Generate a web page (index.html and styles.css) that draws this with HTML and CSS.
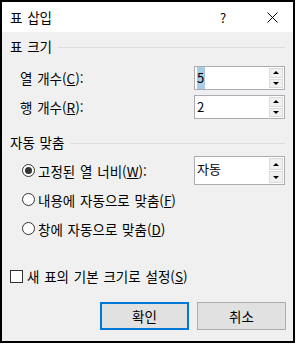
FILE: index.html
```html
<!DOCTYPE html>
<html lang="ko">
<head>
    <meta charset="UTF-8">
    <meta name="viewport" content="width=device-width, initial-scale=1.0">
    <title>표 삽입</title>
    <link rel="stylesheet" href="styles.css">
</head>
<body>
    <div class="dialog">
        <div class="titlebar">
            <span class="title">표 삽입</span>
            <span class="help">?</span>
            <span class="close">
                <svg width="11" height="11" viewBox="0 0 11 11">
                    <path d="M0.5 0.5 L10.5 10.5 M10.5 0.5 L0.5 10.5" stroke="#000" stroke-width="1" fill="none"/>
                </svg>
            </span>
        </div>

        <div class="content">
            <div class="group-head">
                <span>표 크기</span>
                <span class="rule"></span>
            </div>

            <div class="field first">
                <label class="field-label">열 개수(<u>C</u>):</label>
                <div class="spin">
                    <span class="spin-value"><span class="selected">5</span></span>
                    <span class="spin-arrows">
                        <span class="arrow up"></span>
                        <span class="arrow down"></span>
                    </span>
                </div>
            </div>

            <div class="field">
                <label class="field-label">행 개수(<u>R</u>):</label>
                <div class="spin">
                    <span class="spin-value">2</span>
                    <span class="spin-arrows">
                        <span class="arrow up"></span>
                        <span class="arrow down"></span>
                    </span>
                </div>
            </div>

            <div class="group-head second">
                <span>자동 맞춤</span>
                <span class="rule"></span>
            </div>

            <div class="option first-option">
                <span class="radio checked"></span>
                <span class="option-label">고정된 열 너비(<u>W</u>):</span>
                <div class="spin tall">
                    <span class="spin-value">자동</span>
                    <span class="spin-arrows">
                        <span class="arrow up"></span>
                        <span class="arrow down"></span>
                    </span>
                </div>
            </div>

            <div class="option">
                <span class="radio"></span>
                <span class="option-label">내용에 자동으로 맞춤(<u>F</u>)</span>
            </div>

            <div class="option">
                <span class="radio"></span>
                <span class="option-label">창에 자동으로 맞춤(<u>D</u>)</span>
            </div>

            <div class="check-row">
                <span class="checkbox"></span>
                <span class="option-label">새 표의 기본 크기로 설정(<u>S</u>)</span>
            </div>

            <div class="buttons">
                <button class="btn default">확인</button>
                <button class="btn">취소</button>
            </div>
        </div>
    </div>
</body>
</html>
```

FILE: styles.css
```css
body {
    margin: 0;
    background-color: #fff;
    font-family: "Noto Sans CJK KR", "Noto Sans", sans-serif;
    font-size: 13.5px;
    word-spacing: 1px;
    color: #000;
}
.dialog {
    box-sizing: border-box;
    width: 295px;
    height: 343px;
    border: 2px solid #000;
    background-color: #f0f0f0;
}
.titlebar {
    height: 30px;
    background-color: #fff;
    display: flex;
    align-items: center;
    padding-left: 8px;
}
.title {
    flex: 1;
}
.help {
    width: 14px;
    text-align: center;
    margin-right: 37px;
    font-size: 13px;
}
.close {
    display: flex;
    margin-right: 15px;
}
.content {
    padding: 0 8px;
}
.group-head {
    display: flex;
    align-items: center;
    height: 20px;
    margin-top: 4px;
}
.group-head.second {
    margin-top: 13px;
}
.rule {
    flex: 1;
    border-top: 1px solid #dcdcdc;
    margin-left: 6px;
    margin-top: 2px;
}
.field {
    display: flex;
    align-items: center;
    justify-content: space-between;
    padding-left: 10px;
    margin-top: 5px;
}
.field.first {
    margin-top: 10px;
}
.spin {
    box-sizing: border-box;
    width: 91px;
    height: 24px;
    border: 1px solid #abadb3;
    background-color: #fff;
    display: flex;
}
.spin.tall {
    height: 29px;
    margin-left: auto;
}
.spin-value {
    flex: 1;
    padding: 3px 0 0 2px;
    line-height: 16px;
    font-size: 13px;
}
.spin.tall .spin-value {
    padding-top: 4px;
}
.selected {
    background-color: #a8cde9;
    padding: 1px 1px 2px 0;
}
.spin-arrows {
    width: 14px;
    display: flex;
    flex-direction: column;
    padding: 1px;
    gap: 1px;
}
.arrow {
    flex: 1;
    background-color: #f0f0f0;
    border: 1px solid #dadada;
    display: flex;
    align-items: center;
    justify-content: center;
}
.arrow::after {
    content: "";
    border-left: 3px solid transparent;
    border-right: 3px solid transparent;
}
.arrow.up::after {
    border-bottom: 3px solid #000;
}
.arrow.down::after {
    border-top: 3px solid #000;
}
.option {
    display: flex;
    align-items: center;
    height: 29px;
    padding-left: 12px;
}
.option.first-option {
    margin-top: 4px;
}
.radio {
    box-sizing: border-box;
    width: 13px;
    height: 13px;
    border: 1px solid #333;
    border-radius: 50%;
    background-color: #fff;
    margin-right: 3px;
    display: flex;
    align-items: center;
    justify-content: center;
}
.radio.checked::after {
    content: "";
    width: 7px;
    height: 7px;
    border-radius: 50%;
    background-color: #333;
}
.option-label u {
    text-decoration-thickness: 1px;
}
.check-row {
    display: flex;
    align-items: center;
    margin-top: 23px;
    height: 20px;
}
.checkbox {
    box-sizing: border-box;
    width: 13px;
    height: 13px;
    border: 1px solid #333;
    background-color: #fff;
    margin-right: 4px;
}
.buttons {
    display: flex;
    justify-content: flex-end;
    gap: 8px;
    margin-top: 16px;
    margin-right: -1px;
}
.btn {
    box-sizing: border-box;
    width: 89px;
    height: 28px;
    background-color: #e1e1e1;
    border: 1px solid #adadad;
    font-family: inherit;
    font-size: 13.5px;
    color: #000;
    padding: 0;
}
.btn.default {
    border: 2px solid #0078d7;
}
```
